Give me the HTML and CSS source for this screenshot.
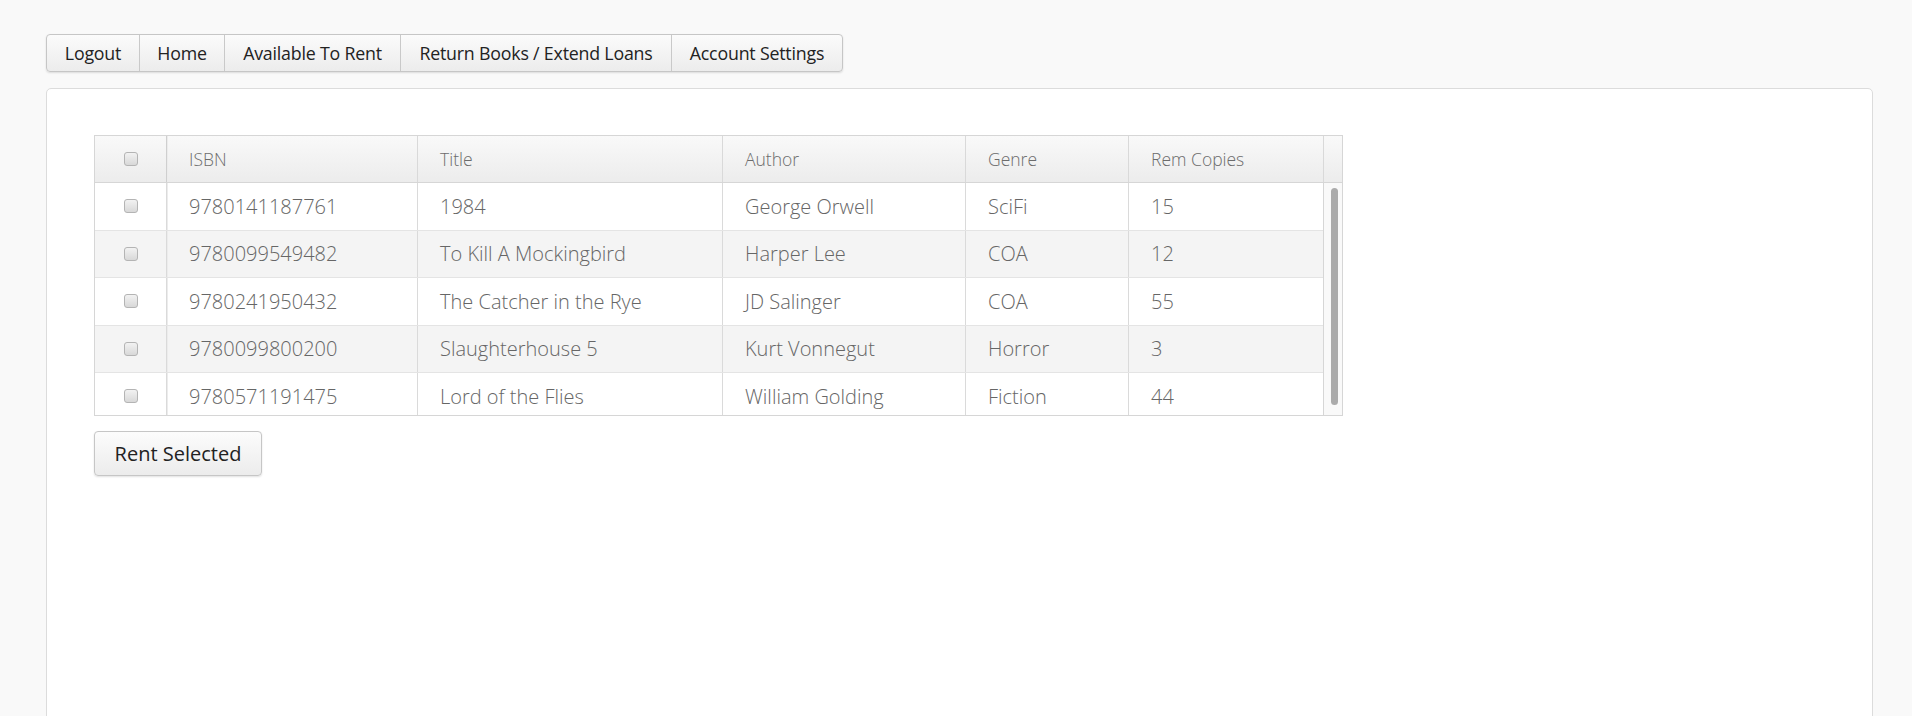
FILE: index.html
```html
<!DOCTYPE html>
<html>
<head>
<meta charset="utf-8">
<link rel="stylesheet" href="styles.css">
</head>
<body>
<nav class="nav">
  <a class="nav-btn w1">Logout</a>
  <a class="nav-btn w2">Home</a>
  <a class="nav-btn w3">Available To Rent</a>
  <a class="nav-btn w4">Return Books / Extend Loans</a>
  <a class="nav-btn w5">Account Settings</a>
</nav>
<main class="panel">
  <div class="grid">
    <div class="grid-head">
      <div class="cell c0"><span class="cb"></span></div>
      <div class="cell c1">ISBN</div>
      <div class="cell c2">Title</div>
      <div class="cell c3">Author</div>
      <div class="cell c4">Genre</div>
      <div class="cell c5">Rem Copies</div>
      <div class="cell cs"></div>
    </div>
    <div class="grid-body">
      <div class="rows">
        <div class="row">
          <div class="cell c0"><span class="cb"></span></div>
          <div class="cell c1">9780141187761</div>
          <div class="cell c2">1984</div>
          <div class="cell c3">George Orwell</div>
          <div class="cell c4">SciFi</div>
          <div class="cell c5">15</div>
        </div>
        <div class="row alt">
          <div class="cell c0"><span class="cb"></span></div>
          <div class="cell c1">9780099549482</div>
          <div class="cell c2">To Kill A Mockingbird</div>
          <div class="cell c3">Harper Lee</div>
          <div class="cell c4">COA</div>
          <div class="cell c5">12</div>
        </div>
        <div class="row">
          <div class="cell c0"><span class="cb"></span></div>
          <div class="cell c1">9780241950432</div>
          <div class="cell c2">The Catcher in the Rye</div>
          <div class="cell c3">JD Salinger</div>
          <div class="cell c4">COA</div>
          <div class="cell c5">55</div>
        </div>
        <div class="row alt">
          <div class="cell c0"><span class="cb"></span></div>
          <div class="cell c1">9780099800200</div>
          <div class="cell c2">Slaughterhouse 5</div>
          <div class="cell c3">Kurt Vonnegut</div>
          <div class="cell c4">Horror</div>
          <div class="cell c5">3</div>
        </div>
        <div class="row">
          <div class="cell c0"><span class="cb"></span></div>
          <div class="cell c1">9780571191475</div>
          <div class="cell c2">Lord of the Flies</div>
          <div class="cell c3">William Golding</div>
          <div class="cell c4">Fiction</div>
          <div class="cell c5">44</div>
        </div>
      </div>
      <div class="scrollbar"><div class="thumb"></div></div>
    </div>
  </div>
  <button class="btn">Rent Selected</button>
</main>
</body>
</html>
```
FILE: styles.css
```css
* { box-sizing: border-box; }
html, body { margin: 0; padding: 0; }
body {
  background: #f9f9f9;
  font-family: "Open Sans", "Liberation Sans", sans-serif;
  padding: 34px 39px 0 46px;
  overflow: hidden;
  height: 716px;
}
.nav {
  display: inline-flex;
  height: 38px;
  border: 1px solid #c6c6c6;
  border-radius: 4px;
  background: linear-gradient(#fbfbfb, #ececec);
  box-shadow: 0 1px 2px rgba(0,0,0,0.12);
}
.nav-btn {
  display: flex;
  align-items: center;
  justify-content: center;
  font-size: 17.8px;
  color: #222;
  border-left: 1px solid #c9c9c9;
  letter-spacing: -0.2px;
}
.nav-btn:first-child { border-left: none; }
.w1 { width: 92px; }
.w2 { width: 85px; }
.w3 { width: 176px; }
.w4 { width: 271px; }
.w5 { width: 171px; }

.panel {
  margin-top: 16px;
  background: #fff;
  border: 1px solid #dcdcdc;
  border-radius: 5px;
  height: 700px;
  padding: 46px 47px;
}
.grid {
  width: 1249px;
  border: 1px solid #d6d6d6;
}
.grid-head {
  display: flex;
  height: 47px;
  background: linear-gradient(#f9f9f9, #ececec);
  border-bottom: 1px solid #d6d6d6;
}
.cell {
  display: flex;
  align-items: center;
  padding-left: 22px;
  border-left: 1px solid #d9d9d9;
  color: #666;
  font-weight: 300;
  white-space: nowrap;
  overflow: hidden;
}
.grid-head .cell { font-size: 17.5px; color: #6c6c6c; }
.c0 { width: 71px; border-left: none; padding-left: 0; justify-content: center; }
.c1 { width: 251px; border-left: 1px solid #cfcfcf; box-shadow: inset 1px 0 0 #ececec; }
.c2 { width: 305px; }
.c3 { width: 243px; }
.c4 { width: 163px; }
.c5 { width: 195px; }
.cs { width: 19px; padding: 0; }
.grid-body {
  display: flex;
  height: 232px;
}
.rows {
  width: 1228px;
  overflow: hidden;
}
.row {
  display: flex;
  height: 47.5px;
  border-bottom: 1px solid #e4e4e4;
  background: #fff;
}
.row.alt { background: #f4f4f4; }
.row .cell { font-size: 20px; border-left-color: #dadada; }
.cb {
  width: 14px;
  height: 14px;
  border: 1px solid #b4b4b4;
  border-radius: 3px;
  background: linear-gradient(#f2f2f2, #d8d8d8);
}
.scrollbar {
  width: 19px;
  border-left: 1px solid #d6d6d6;
  background: #f9f9f9;
  padding: 5px 0 0 7px;
}
.thumb {
  width: 7px;
  height: 217px;
  border-radius: 4px;
  background: #ababab;
}
.btn {
  display: block;
  margin-top: 15px;
  width: 168px;
  height: 45px;
  font-family: "Open Sans", "Liberation Sans", sans-serif;
  font-size: 20px;
  color: #222;
  background: linear-gradient(#fcfcfc, #ececec);
  border: 1px solid #c6c6c6;
  border-radius: 4px;
  box-shadow: 0 1px 2px rgba(0,0,0,0.12);
  padding: 0;
}
```
